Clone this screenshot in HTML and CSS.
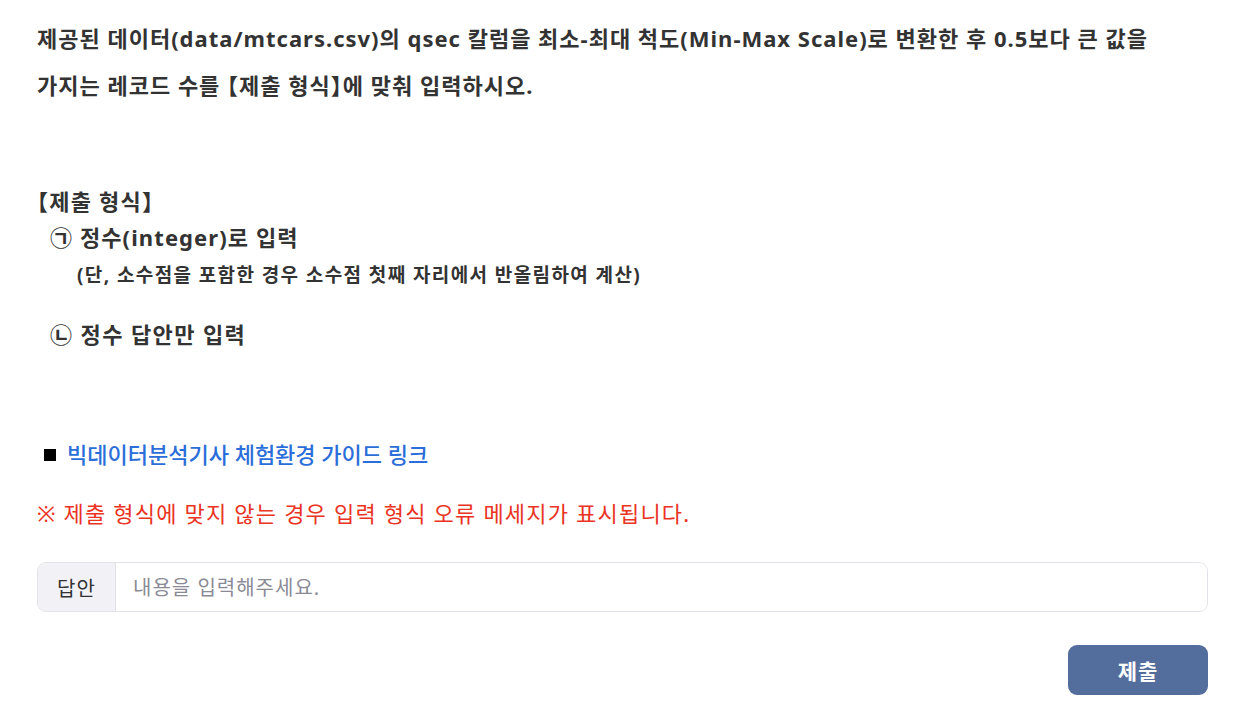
FILE: index.html
```html
<!DOCTYPE html>
<html lang="ko">
<head>
<meta charset="utf-8">
<link rel="stylesheet" href="styles.css">
</head>
<body>
<main class="page">
  <p class="question">제공된 데이터(data/mtcars.csv)의 qsec 칼럼을 최소-최대 척도(Min-Max Scale)로 변환한 후 0.5보다 큰 값을<br>가지는 레코드 수를 <span class="br">【</span>제출 형식<span class="br">】</span>에 맞춰 입력하시오.</p>

  <section class="format">
    <div class="format-title"><span class="br">【</span>제출 형식<span class="br">】</span></div>
    <div class="format-item first">㉠ 정수(integer)로 입력</div>
    <div class="format-note">(단, 소수점을 포함한 경우 소수점 첫째 자리에서 반올림하여 계산)</div>
    <div class="format-item second">㉡ 정수 답안만 입력</div>
  </section>

  <div class="guide"><span class="bullet"></span><a class="guide-link" href="#">빅데이터분석기사 체험환경 가이드 링크</a></div>

  <p class="warning">※ 제출 형식에 맞지 않는 경우 입력 형식 오류 메세지가 표시됩니다.</p>

  <div class="answer">
    <span class="answer-label">답안</span>
    <input class="answer-input" type="text" placeholder="내용을 입력해주세요.">
  </div>

  <div class="actions">
    <button class="submit" type="button">제출</button>
  </div>
</main>
</body>
</html>
```

FILE: styles.css
```css
* { box-sizing: border-box; }
html, body { margin: 0; padding: 0; background: #fff; }
body {
  font-family: "Noto Sans", "Noto Sans CJK KR", sans-serif;
  color: #333333;
}
.br {
  font-family: "Noto Sans CJK KR", sans-serif;
  font-feature-settings: "halt";
}
.page {
  padding: 15px 42px 0 37px;
}
.question {
  margin: 0;
  height: 92px;
  font-size: 22px;
  line-height: 46px;
  font-weight: 700;
  letter-spacing: 1px;
}
.format {
  margin-top: 75px;
  font-weight: 700;
}
.format-title {
  height: 36px;
  font-size: 22px;
  line-height: 36px;
  letter-spacing: 1.2px;
}
.format-item {
  height: 38px;
  padding-left: 13px;
  font-size: 22px;
  line-height: 38px;
  letter-spacing: 1.1px;
}
.format-item.first {
  height: 40px;
}
.format-item.second {
  margin-top: 23px;
  letter-spacing: 1.4px;
}
.format-note {
  height: 34px;
  padding-left: 40px;
  font-size: 19px;
  line-height: 34px;
  letter-spacing: 1.4px;
}
.guide {
  margin-top: 86px;
  height: 30px;
  display: flex;
  align-items: center;
  padding-left: 7px;
}
.bullet {
  width: 12px;
  height: 12px;
  flex: none;
  background: #000;
  margin-right: 11px;
  margin-top: 2px;
}
.guide-link {
  color: #2b6ed9;
  text-decoration: none;
  font-size: 22px;
  line-height: 30px;
  font-weight: 500;
  letter-spacing: 0;
}
.warning {
  margin: 29px 0 0;
  height: 30px;
  color: #ea3323;
  font-size: 22px;
  line-height: 30px;
  letter-spacing: 1.2px;
}
.answer {
  margin-top: 34px;
  display: flex;
  height: 50px;
  border: 1px solid #e2e2e8;
  border-radius: 9px;
  overflow: hidden;
}
.answer-label {
  width: 78px;
  flex: none;
  display: flex;
  align-items: center;
  justify-content: center;
  background: #f2f2f6;
  border-right: 1px solid #e2e2e8;
  font-size: 20px;
  letter-spacing: 1px;
  color: #333;
}
.answer-input {
  flex: 1;
  border: none;
  outline: none;
  padding: 0 17px;
  font-family: inherit;
  font-size: 20px;
  letter-spacing: 1px;
  color: #333;
  background: #fff;
}
.answer-input::placeholder {
  color: #8a8a96;
}
.actions {
  margin-top: 33px;
  display: flex;
  justify-content: flex-end;
}
.submit {
  width: 140px;
  height: 50px;
  border: none;
  border-radius: 9px;
  background: #536e9c;
  color: #fff;
  font-family: inherit;
  font-size: 21px;
  letter-spacing: 1px;
  font-weight: 700;
}
```
